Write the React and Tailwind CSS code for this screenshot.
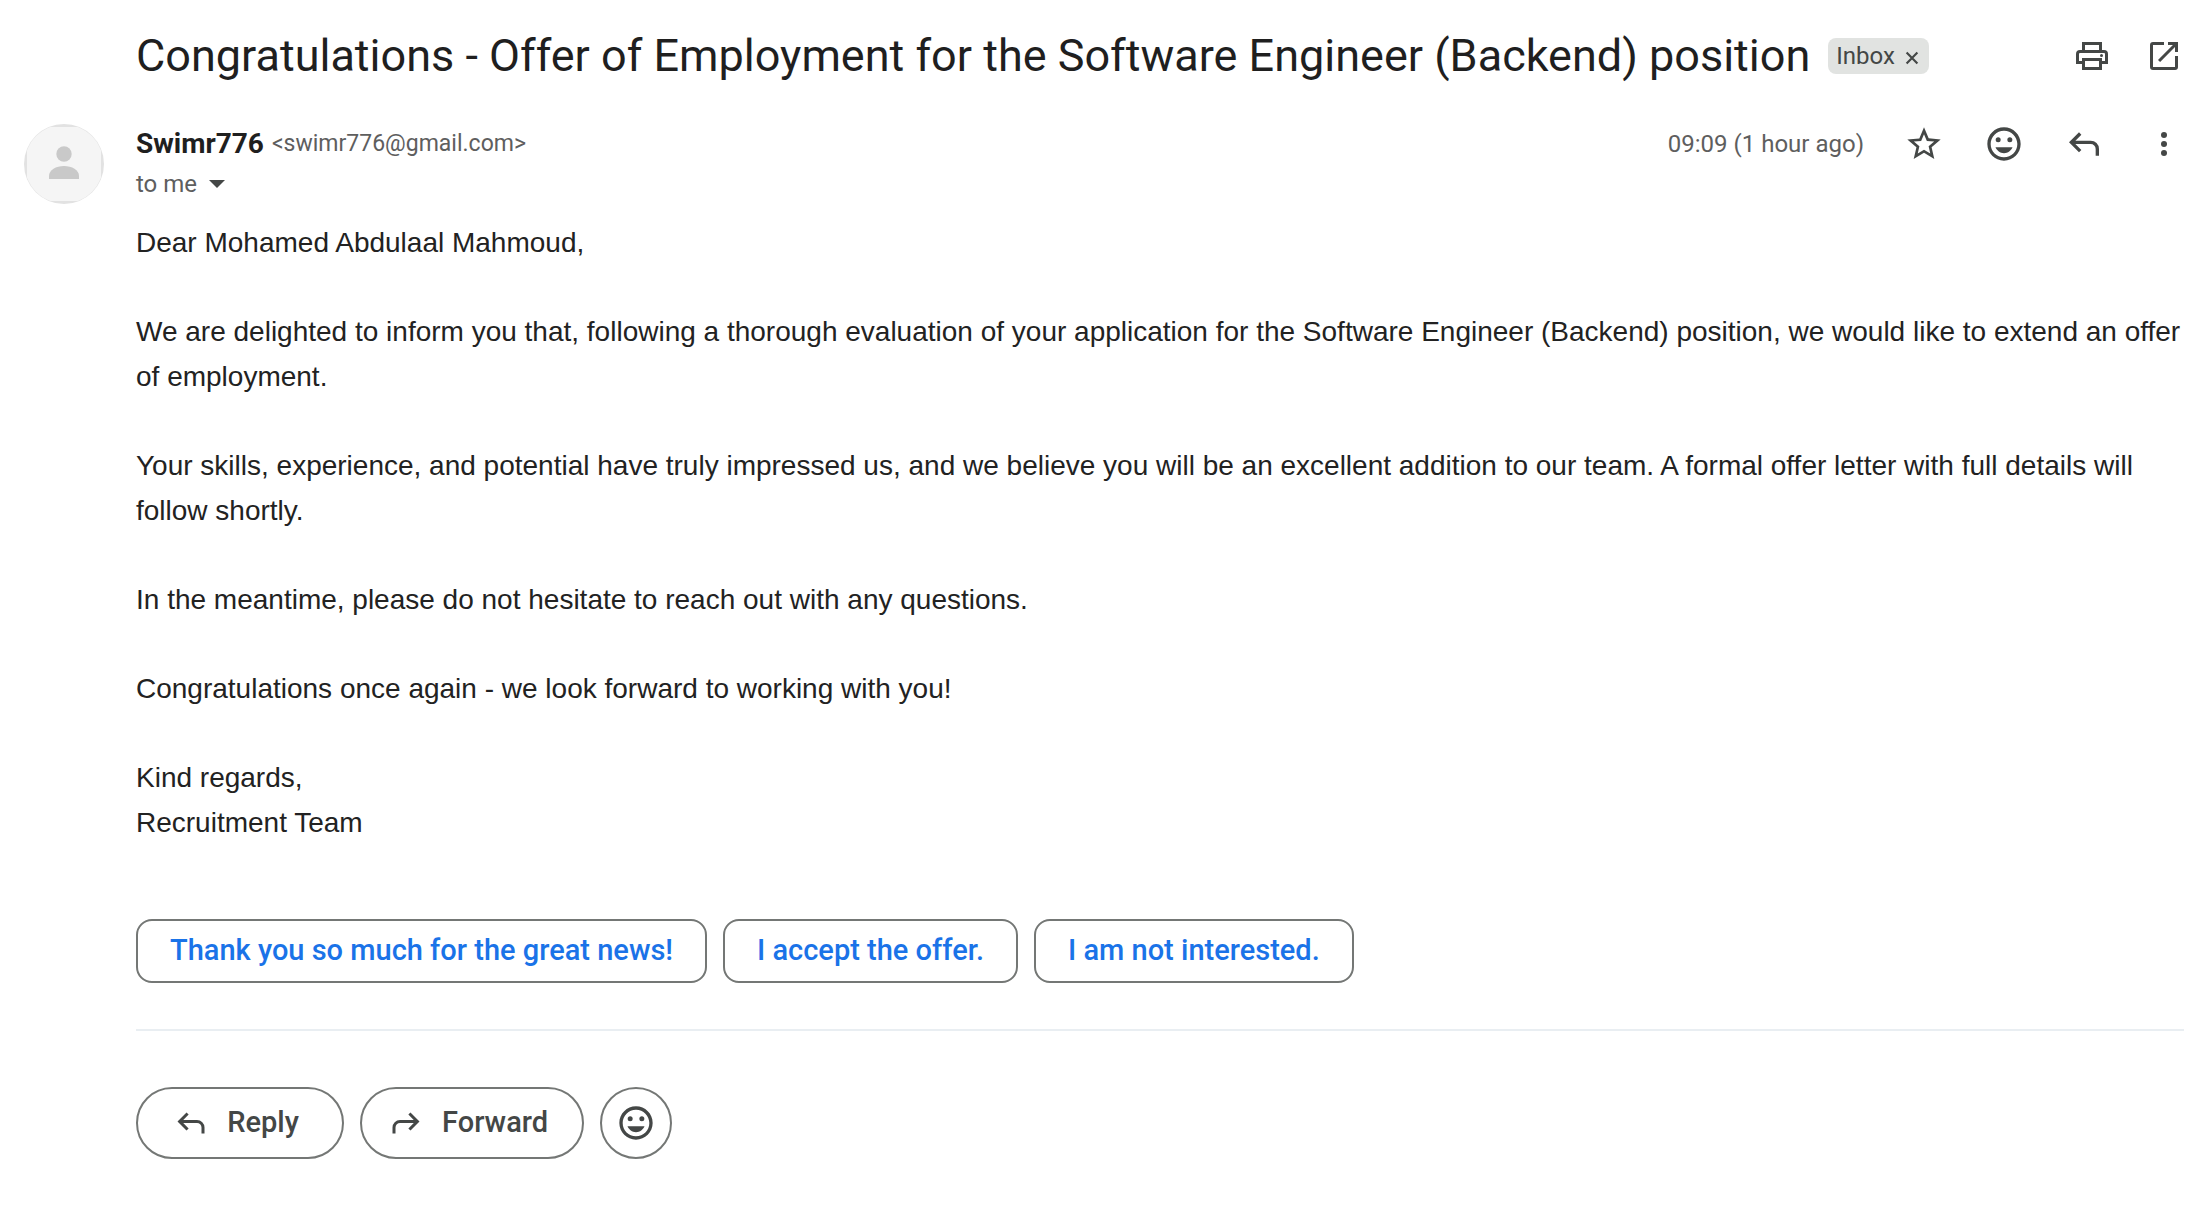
import React from 'react';

const PARAGRAPHS = [
  ['Dear Mohamed Abdulaal Mahmoud,'],
  [
    'We are delighted to inform you that, following a thorough evaluation of your application for the Software Engineer (Backend) position, we would like to extend an offer of employment.',
  ],
  [
    'Your skills, experience, and potential have truly impressed us, and we believe you will be an excellent addition to our team. A formal offer letter with full details will follow shortly.',
  ],
  ['In the meantime, please do not hesitate to reach out with any questions.'],
  ['Congratulations once again - we look forward to working with you!'],
  ['Kind regards,', 'Recruitment Team'],
];

const SMART_REPLIES = [
  'Thank you so much for the great news!',
  'I accept the offer.',
  'I am not interested.',
];

const PrintIcon = () => (
  <svg viewBox="0 0 20 20" fill="currentColor" className="size-10">
    <path d="M5 7V3h10v4h-1.5V4.5h-7V7z" />
    <path d="M5 14H2V9a2 2 0 0 1 2-2h12a2 2 0 0 1 2 2v5h-3v-1.5h1.5V9a.5.5 0 0 0-.5-.5H4a.5.5 0 0 0-.5.5v3.5H5z" />
    <path fillRule="evenodd" d="M5 11h10v6H5zM6.5 12.5v3h7v-3z" />
    <circle cx="14.75" cy="9.75" r="0.75" />
  </svg>
);

const OpenInNewIcon = () => (
  <svg viewBox="0 0 20 20" fill="currentColor" className="size-10">
    <path d="M4.5 17A1.5 1.5 0 0 1 3 15.5v-11A1.5 1.5 0 0 1 4.5 3H10v1.5H4.5v11h11V10H17v5.5a1.5 1.5 0 0 1-1.5 1.5zM8.06 13 7 11.94l7.44-7.44H12V3h5v5h-1.5V5.56z" />
  </svg>
);

const StarIcon = () => (
  <svg viewBox="0 0 24 24" fill="currentColor" className="size-10">
    <path d="M22 9.24l-7.19-.62L12 2 9.19 8.63 2 9.24l5.46 4.73L5.82 21 12 17.27 18.18 21l-1.63-7.03L22 9.24zM12 15.4l-3.76 2.27 1-4.28-3.32-2.88 4.38-.38L12 6.1l1.71 4.04 4.38.38-3.32 2.88 1 4.28L12 15.4z" />
  </svg>
);

const EmojiIcon = () => (
  <svg viewBox="0 0 24 24" fill="currentColor" className="size-10">
    <path d="M11.99 2C6.47 2 2 6.48 2 12s4.47 10 9.99 10C17.52 22 22 17.52 22 12S17.52 2 11.99 2zM12 20c-4.42 0-8-3.58-8-8s3.58-8 8-8 8 3.58 8 8-3.58 8-8 8z" />
    <circle cx="15.5" cy="9.5" r="1.5" />
    <circle cx="8.5" cy="9.5" r="1.5" />
    <path d="M12 17.5c2.33 0 4.31-1.46 5.11-3.5H6.89c.8 2.04 2.78 3.5 5.11 3.5z" />
  </svg>
);

const ReplyIcon = ({ className = 'size-10' }) => (
  <svg viewBox="0 -960 960 960" fill="currentColor" className={className}>
    <path d="M760-200v-160q0-50-35-85t-85-35H273l144 144-57 56-240-240 240-240 57 56-144 144h367q83 0 141.5 58.5T840-360v160h-80Z" />
  </svg>
);

const MoreIcon = () => (
  <svg viewBox="0 0 20 20" fill="currentColor" className="size-10">
    <circle cx="10" cy="5.5" r="1.5" />
    <circle cx="10" cy="10" r="1.5" />
    <circle cx="10" cy="14.5" r="1.5" />
  </svg>
);

const Avatar = () => (
  <svg viewBox="0 0 80 80" className="size-20" role="img" aria-label="Swimr776">
    <clipPath id="avatar-clip">
      <circle cx="40" cy="40" r="39.5" />
    </clipPath>
    <circle cx="40" cy="40" r="40" fill="#e2e2e2" />
    <rect x="3" y="3" width="74" height="74" fill="#f5f5f5" clipPath="url(#avatar-clip)" />
    <circle cx="40" cy="30" r="7.7" fill="#c9c9c9" />
    <path d="M25 55v-3c0-6 7-10 15-10s15 4 15 10v3z" fill="#c9c9c9" />
  </svg>
);

const IconButton = ({ label, children }) => (
  <button type="button" aria-label={label} className="text-[#444746]">
    {children}
  </button>
);

const SubjectBar = () => (
  <header className="flex items-center justify-between pl-[136px]">
    <div className="flex items-center gap-[18px]">
      <h1 className="text-[45px] leading-[56px]">
        Congratulations - Offer of Employment for the Software Engineer (Backend) position
      </h1>
      <div className="flex h-9 items-center gap-1 rounded-lg bg-[#e1e3e1] px-2 text-2xl text-[#444746]">
        <span>Inbox</span>
        <button type="button" aria-label="Remove label Inbox" className="pt-1 pl-1">
          <svg viewBox="0 0 20 20" fill="none" stroke="currentColor" strokeWidth="2.4" className="size-[18px]">
            <path d="M4 4l12 12M16 4L4 16" />
          </svg>
        </button>
      </div>
    </div>
    <div className="flex gap-8">
      <IconButton label="Print all"><PrintIcon /></IconButton>
      <IconButton label="Open in new window"><OpenInNewIcon /></IconButton>
    </div>
  </header>
);

const MessageHeader = () => (
  <div className="flex items-start justify-between">
    <div>
      <div className="flex h-10 items-center gap-2">
        <span className="text-[28px] font-bold">Swimr776</span>
        <span className="text-[23px] text-[#5e5e5e]">&lt;swimr776@gmail.com&gt;</span>
      </div>
      <button type="button" className="flex h-10 items-center gap-3 text-2xl text-[#5e5e5e]">
        to me
        <svg viewBox="0 0 16 8" className="h-2 w-4 fill-[#444746]">
          <path d="M0 0h16L8 8z" />
        </svg>
      </button>
    </div>
    <div className="flex items-center gap-10">
      <time className="text-2xl text-[#5e5e5e]">09:09 (1 hour ago)</time>
      <IconButton label="Star"><StarIcon /></IconButton>
      <IconButton label="Add reaction"><EmojiIcon /></IconButton>
      <IconButton label="Reply"><ReplyIcon /></IconButton>
      <IconButton label="More"><MoreIcon /></IconButton>
    </div>
  </div>
);

const App = () => {
  return (
    <main className="bg-white pt-7 pr-[17px] pb-18 font-[Roboto,sans-serif] text-[#1f1f1f]">
      <SubjectBar />

      <article className="mt-10 flex">
        <div className="w-[136px] shrink-0 pl-6">
          <Avatar />
        </div>

        <div className="min-w-0 flex-1">
          <MessageHeader />

          <div className="mt-4 space-y-11 font-[Liberation_Sans,Arial,sans-serif] text-[28px] leading-[45px] text-[#222222]">
            {PARAGRAPHS.map((lines) => (
              <p key={lines[0]}>
                {lines.map((line) => (
                  <span key={line} className="block">{line}</span>
                ))}
              </p>
            ))}
          </div>

          <div className="mt-[74px] flex gap-4">
            {SMART_REPLIES.map((text) => (
              <button
                key={text}
                type="button"
                className="h-16 rounded-2xl border-2 border-[#747775] px-8 text-[29px] font-medium text-[#1a73e8]"
              >
                {text}
              </button>
            ))}
          </div>

          <hr className="mt-[46px] border-t-2 border-[#e9eef2]" />

          <div className="mt-14 flex gap-4 text-[29px] font-medium text-[#444746]">
            <button
              type="button"
              className="flex h-18 min-w-52 items-center justify-center gap-[18px] rounded-full border-2 border-[#747775] pl-[26px] pr-[34px]"
            >
              <ReplyIcon className="size-9" />
              Reply
            </button>
            <button
              type="button"
              className="flex h-18 min-w-52 items-center justify-center gap-[18px] rounded-full border-2 border-[#747775] pl-[26px] pr-[34px]"
            >
              <ReplyIcon className="size-9 -scale-x-100" />
              Forward
            </button>
            <button
              type="button"
              aria-label="Add reaction"
              className="flex size-18 items-center justify-center rounded-full border-2 border-[#747775]"
            >
              <EmojiIcon />
            </button>
          </div>
        </div>
      </article>
    </main>
  );
};

export default App;
